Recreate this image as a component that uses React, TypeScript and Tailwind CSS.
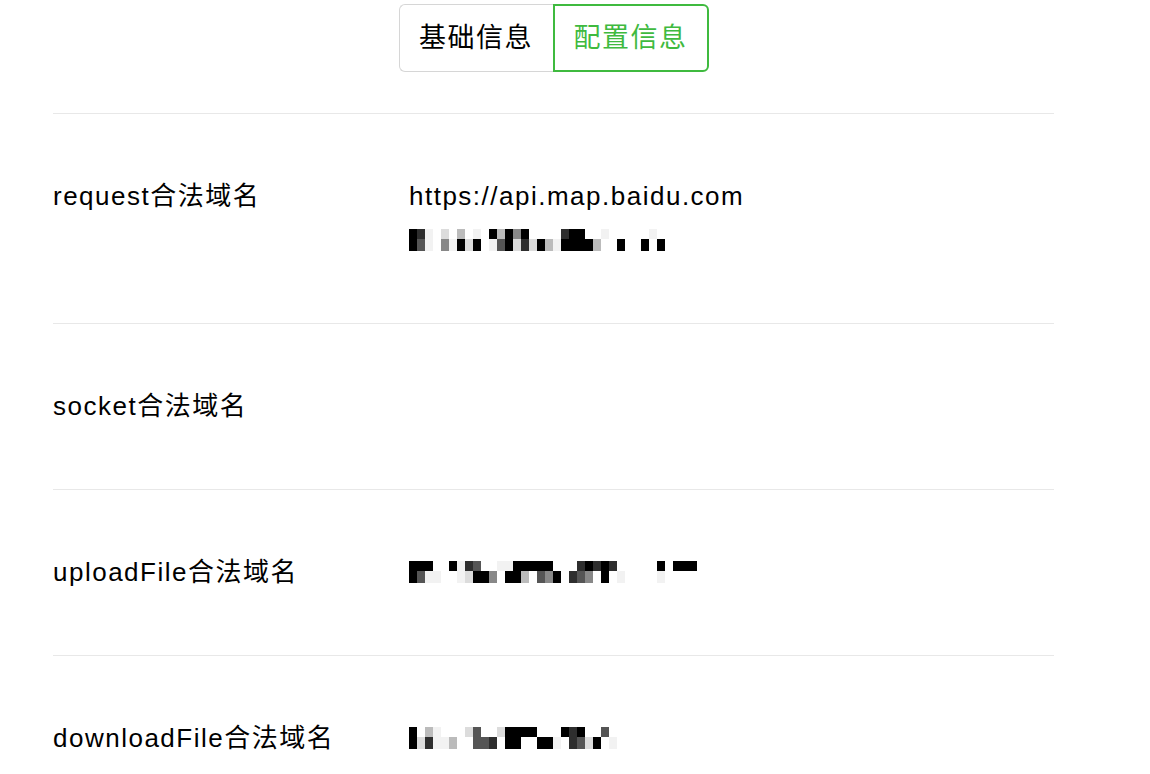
// App.tsx — 配置信息 panel

const shades: Record<string, string> = {
  " ": "#ffffff",
  a: "#f2f2f2",
  b: "#dcdcdc",
  c: "#bbbbbb",
  d: "#888888",
  e: "#555555",
  f: "#2e2e2e",
  g: "#000000",
};

// blurred (mosaic) values, two rows of 8px cells each
const mosaics: Record<string, [string, string]> = {
  request: [
    "gfa b c a gcgdg    fgg  a     a ",
    "gea dagbg aegbfbgcaggggc  g  g g",
  ],
  upload: [
    "ggg  gafe  aaggggg   fgfgf     g ggg",
    "geaa  abggd ggc edg fed g a    a    ",
  ],
  download: [
    "g ca   be  bgggg   gfg  e  ",
    "gbfaac  eef gg  gga febg a ",
  ],
};

function Mosaic({ name }: { name: string }) {
  const [top, bottom] = mosaics[name];
  return (
    <div className="flex h-[24px] items-stretch">
      {top.split("").map((t, i) => (
        <div key={i} className="flex w-[8px] flex-col">
          <div className="h-[10px]" style={{ backgroundColor: shades[t] }} />
          <div className="h-[12px]" style={{ backgroundColor: shades[bottom[i] ?? " "] }} />
        </div>
      ))}
    </div>
  );
}

const rows = [
  { label: "request合法域名", values: ["https://api.map.baidu.com", "#request"] },
  { label: "socket合法域名", values: [] as string[] },
  { label: "uploadFile合法域名", values: ["#upload"] },
  { label: "downloadFile合法域名", values: ["#download"] },
];

export default function App() {
  return (
    <div
      className="min-h-screen bg-white text-black"
      style={{ fontFamily: '"Liberation Sans", "Noto Sans CJK SC", sans-serif' }}
    >
      <div className="ml-[53px] w-[1001px]">
        {/* tabs */}
        <div className="flex justify-center pt-[4px]">
          <div className="flex h-[68px] text-[27px] tracking-[1.5px]">
            <button className="w-[154px] rounded-l-[6px] border border-r-0 border-[#d6d6d6] text-black">
              基础信息
            </button>
            <button className="w-[156px] rounded-r-[6px] border-2 border-[#3fba3f] text-[#3fba3f]">
              配置信息
            </button>
          </div>
        </div>

        <div className="mt-[41px]">
          {rows.map((row) => (
            <div key={row.label} className="flex border-t border-[#e8e8e8] pt-[60px] pb-[60px] text-[26px] leading-[45px] tracking-[1.5px]">
              <div className="w-[356px]">{row.label}</div>
              <div className="flex flex-col">
                {row.values.length === 0 && <div className="h-[45px]" />}
                {row.values.map((v, i) =>
                  v.startsWith("#") ? (
                    <div key={v} className={`flex items-center ${i > 0 ? "h-[44px]" : "h-[45px]"}`}>
                      <Mosaic name={v.slice(1)} />
                    </div>
                  ) : (
                    <div key={v}>{v}</div>
                  )
                )}
              </div>
            </div>
          ))}
        </div>
      </div>
    </div>
  );
}
